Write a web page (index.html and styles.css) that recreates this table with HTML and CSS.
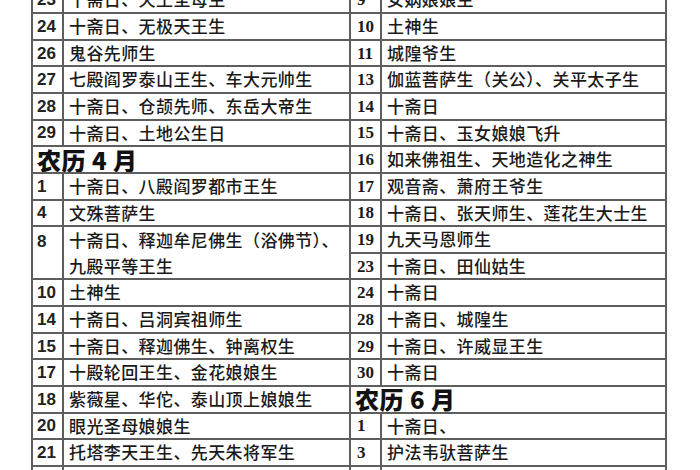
FILE: index.html
```html
<!DOCTYPE html>
<html lang="zh">
<head>
<meta charset="utf-8">
<title>农历</title>
<link rel="stylesheet" href="styles.css">
</head>
<body>
<div class="sheet">
  <div class="tbl left">
    <div class="row"><div class="num">23</div><div class="txt">十斋日、天王圣母生</div></div>
    <div class="row"><div class="num">24</div><div class="txt">十斋日、无极天王生</div></div>
    <div class="row"><div class="num">26</div><div class="txt">鬼谷先师生</div></div>
    <div class="row"><div class="num">27</div><div class="txt">七殿阎罗泰山王生、车大元帅生</div></div>
    <div class="row"><div class="num">28</div><div class="txt">十斋日、仓颉先师、东岳大帝生</div></div>
    <div class="row"><div class="num">29</div><div class="txt">十斋日、土地公生日</div></div>
    <div class="row head">农历 4 月</div>
    <div class="row"><div class="num">1</div><div class="txt">十斋日、八殿阎罗都市王生</div></div>
    <div class="row"><div class="num">4</div><div class="txt">文殊菩萨生</div></div>
    <div class="row tall"><div class="num top">8</div><div class="txt">十斋日、释迦牟尼佛生（浴佛节）、<br>九殿平等王生</div></div>
    <div class="row"><div class="num">10</div><div class="txt">土神生</div></div>
    <div class="row"><div class="num">14</div><div class="txt">十斋日、吕洞宾祖师生</div></div>
    <div class="row"><div class="num">15</div><div class="txt">十斋日、释迦佛生、钟离权生</div></div>
    <div class="row"><div class="num">17</div><div class="txt">十殿轮回王生、金花娘娘生</div></div>
    <div class="row"><div class="num">18</div><div class="txt">紫薇星、华佗、泰山顶上娘娘生</div></div>
    <div class="row"><div class="num">20</div><div class="txt">眼光圣母娘娘生</div></div>
    <div class="row"><div class="num">21</div><div class="txt">托塔李天王生、先天朱将军生</div></div>
    <div class="row"><div class="num">22</div><div class="txt">十斋日</div></div>
  </div>
  <div class="tbl right">
    <div class="row"><div class="num">9</div><div class="txt">女娲娘娘生</div></div>
    <div class="row"><div class="num">10</div><div class="txt">土神生</div></div>
    <div class="row"><div class="num">11</div><div class="txt">城隍爷生</div></div>
    <div class="row"><div class="num">13</div><div class="txt">伽蓝菩萨生（关公）、关平太子生</div></div>
    <div class="row"><div class="num">14</div><div class="txt">十斋日</div></div>
    <div class="row"><div class="num">15</div><div class="txt">十斋日、玉女娘娘飞升</div></div>
    <div class="row"><div class="num">16</div><div class="txt">如来佛祖生、天地造化之神生</div></div>
    <div class="row"><div class="num">17</div><div class="txt">观音斋、萧府王爷生</div></div>
    <div class="row"><div class="num">18</div><div class="txt">十斋日、张天师生、莲花生大士生</div></div>
    <div class="row"><div class="num">19</div><div class="txt">九天马恩师生</div></div>
    <div class="row"><div class="num">23</div><div class="txt">十斋日、田仙姑生</div></div>
    <div class="row"><div class="num">24</div><div class="txt">十斋日</div></div>
    <div class="row"><div class="num">28</div><div class="txt">十斋日、城隍生</div></div>
    <div class="row"><div class="num">29</div><div class="txt">十斋日、许威显王生</div></div>
    <div class="row"><div class="num">30</div><div class="txt">十斋日</div></div>
    <div class="row head">农历 6 月</div>
    <div class="row"><div class="num">1</div><div class="txt">十斋日、</div></div>
    <div class="row"><div class="num">3</div><div class="txt">护法韦驮菩萨生</div></div>
    <div class="row"><div class="num">6</div><div class="txt">十斋日</div></div>
  </div>
</div>
</body>
</html>
```
FILE: styles.css
```css
html, body {
  margin: 0;
  padding: 0;
  background: #ffffff;
  overflow: hidden;
  height: 470px;
}

.sheet {
  display: flex;
  margin-left: 31px;
  margin-top: -14.6px;
  width: 636px;
  color: #1a1a1a;
  font-family: "Noto Sans CJK SC", "Liberation Sans", sans-serif;
}

.tbl {
  display: flex;
  flex-direction: column;
  border-left: 2px solid #5e5e5e;
  box-sizing: border-box;
}

.left { width: 318px; }

.right {
  width: 318px;
  border-right: 2px solid #5e5e5e;
}

.row {
  display: grid;
  grid-template-columns: 31px 1fr;
  height: 26.65px;
  flex: none;
  box-sizing: border-box;
  border-top: 2px solid #5e5e5e;
}

.row.tall { height: 53.3px; }

.num {
  border-right: 2px solid #5e5e5e;
  padding-left: 5px;
  display: flex;
  align-items: center;
  font-size: 17px;
  line-height: 1;
}

.num.top {
  align-items: flex-start;
  padding-top: 6px;
}

.left .num {
  font-family: "Liberation Sans", Arial, sans-serif;
  font-weight: 700;
  font-size: 17px;
  color: #222;
  padding-left: 4px;
}

.right .num {
  font-family: "Liberation Serif", "Times New Roman", serif;
  font-weight: 700;
  font-size: 17px;
  padding-left: 6px;
}

.txt {
  padding-left: 5px;
  font-size: 17px;
  font-weight: 500;
  line-height: 24.6px;
  white-space: nowrap;
  letter-spacing: 0.4px;
}

.tall .txt { line-height: 26px; }

.row.head {
  display: flex;
  align-items: center;
  padding-left: 4px;
  font-size: 24px;
  font-weight: 900;
  line-height: 24px;
  color: #111;
  letter-spacing: 0.5px;
  white-space: pre;
}
```
